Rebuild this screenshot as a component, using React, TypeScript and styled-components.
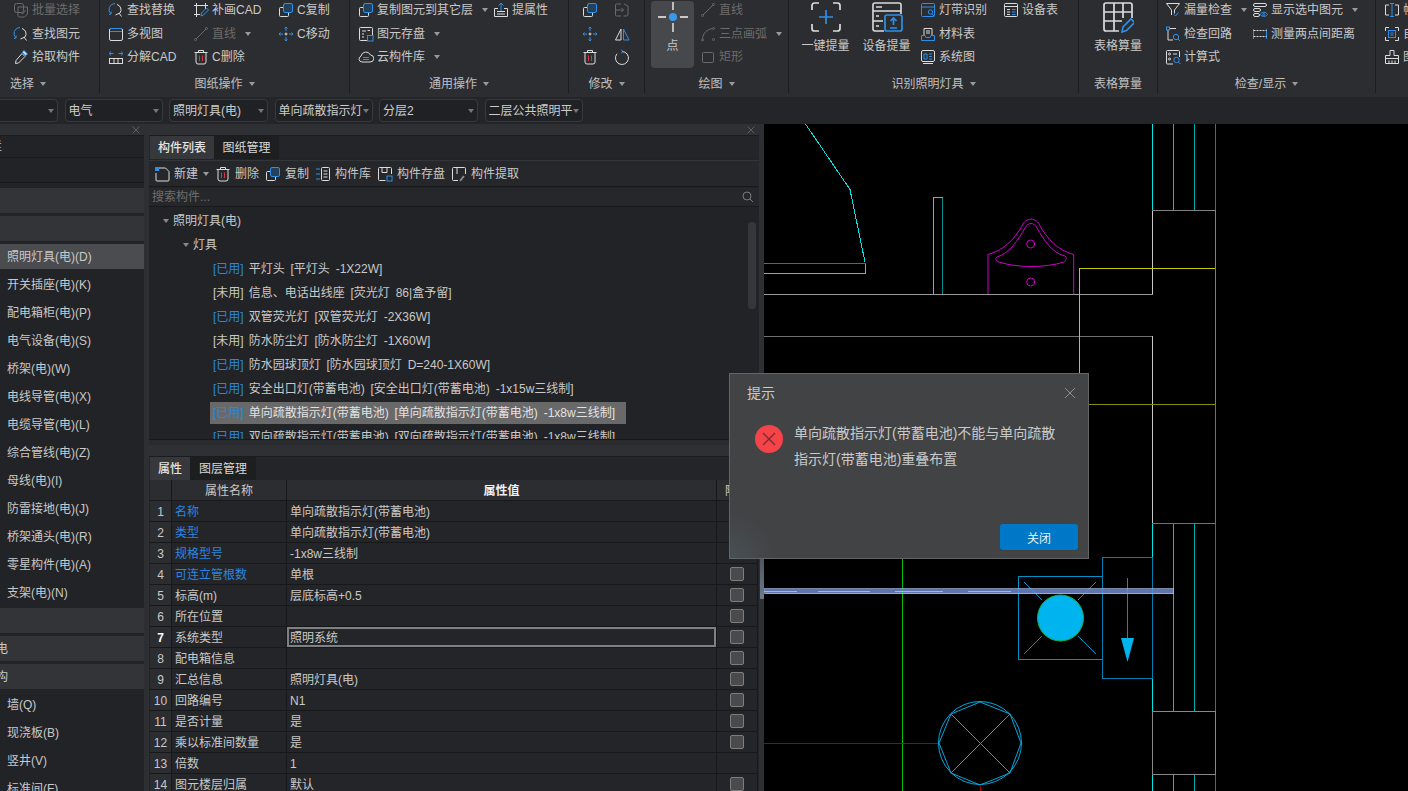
import React, { ReactNode } from 'react';
import styled, { createGlobalStyle } from 'styled-components';

const Global = createGlobalStyle`
  html, body { margin: 0; padding: 0; background: #000; }
  * { box-sizing: border-box; }
`;

const W = '#dcdcdc', B = '#2f8fe8', R = '#e0353a', D = '#6a6a6a';

const icons: Record<string, ReactNode> = {
  batch: <g stroke={D}><rect x="1.500" y="1.500" width="9" height="9" rx="2" /><path d="M5 5h9.500v7l-3 3H6.500a1.500 1.500 0 0 1-1.500-1.500zM7.500 10l2 2 3-4" /></g>,
  find: <><path stroke={B} d="M7 1.500A6 6 0 0 0 3 12l-2 .5M3 12l.2-2.500" /><path stroke={W} d="M9 2.500a5.500 5.500 0 0 1 3 8.500l-4.500 2M11 11l2.500 3.500" /></>,
  pick: <><path stroke={W} d="M9 4.500l3 3-6.500 6.500-3 .5.5-3z" /><path stroke={B} d="M10 2.500l1-1 3.500 3.500-1 1-1 .5-3-3z" fill={W} /></>,
  multi: <><rect x="1.500" y="2.500" width="13" height="12" rx="1.500" stroke={W} /><path stroke={B} d="M2 2.500h12M2 5.500h12" /></>,
  explode: <><rect x="1.500" y="9.500" width="13" height="5" stroke={W} /><path stroke={W} d="M6 9.500v5M10 9.500v5" /><path stroke={B} d="M1.500 4.500h4M2.500 2.500l-1 2 1 2M14.500 4.500h-4M13.500 2.500l1 2-1 2" /></>,
  patch: <><path stroke={W} d="M3.500 1v14M1 3.500h14M12.500 1v6M1 12.500h6" /><path stroke={B} d="M8 14l.5-3 5-5 2 2-5 5z" /></>,
  line: <g stroke={D}><path d="M3 13L13 3" /><circle cx="2.500" cy="13.500" r="1" /><circle cx="13.500" cy="2.500" r="1" /></g>,
  trash: <><path stroke={W} d="M1.500 3.500h13M5.500 3.500v-2h5v2M3 3.500V13a2 2 0 0 0 2 2h6a2 2 0 0 0 2-2V3.500" /><path stroke={R} d="M6.500 6.500v5.500M9.500 6.500v5.500" /></>,
  copy: <><path stroke={W} d="M5 5.500H2.500a1 1 0 0 0-1 1v7a1 1 0 0 0 1 1h7a1 1 0 0 0 1-1V11" /><rect x="5.500" y="1.500" width="9" height="9" rx="1.500" stroke={B} fill="#22415f" /></>,
  move: <><path stroke={B} d="M8 1v4M8 11v4M1 8h4M11 8h4M6.500 2.500L8 1l1.500 1.500M6.500 13.500L8 15l1.500-1.500M2.500 6.500L1 8l1.500 1.500M13.500 6.500L15 8l-1.500 1.500" /><path stroke={W} d="M8 6.500v3M6.500 8h3" /></>,
  disk: <><path stroke={W} d="M14.500 9V2.500a1 1 0 0 0-1-1h-11a1 1 0 0 0-1 1v11a1 1 0 0 0 1 1H9M4 5h4M4 8h2M4 11h2M9.500 4.500h2.500" /><rect x="9.500" y="9.500" width="5.500" height="5.500" stroke={B} /></>,
  cloud: <><path stroke={W} d="M4 13a3 3 0 0 1-1-5.800A5 5 0 0 1 12.500 6 3.500 3.500 0 0 1 12 13z" /><path stroke={B} d="M5 8.500h6M5 10.500h6" /></>,
  attr: <><path stroke={W} d="M5 6.500H1.500v8h13v-8H11M4 9.500h8M4 12h8" /><path stroke={B} d="M8 9V1M5.500 3.500L8 1l2.500 2.500" /></>,
  flip: <g stroke={D}><path d="M7 2H2.500a1 1 0 0 0-1 1v10a1 1 0 0 0 1 1H7M10 2l4 2v9l-1.500 1H9.500M1.500 8h8M7.500 6l2 2-2 2" /></g>,
  mirror: <><path stroke={W} d="M7 3v11H1.500z" /><path stroke={B} d="M9.500 3v11H15z" /></>,
  rotate: <><path stroke={W} d="M8 2.500a6.500 6.500 0 1 1-5 2.300" /><path stroke={B} d="M7 .8L9.200 2.500 7 4.200" /></>,
  arc: <g stroke={D}><path d="M2.500 13C3 7 7 3.500 12.500 2.500" /><circle cx="2.500" cy="14" r="1" /><circle cx="13.500" cy="2.500" r="1" /><circle cx="13.500" cy="13.500" r="1" /></g>,
  rect: <g stroke={D}><rect x="2.500" y="3.500" width="11" height="10" rx="1" /></g>,
  band: <><rect x="1.500" y="1.500" width="13" height="13" rx="1" stroke={B} /><path stroke={B} d="M1.500 5h13" /><circle cx="10.500" cy="10" r="2.200" stroke={B} /><path stroke={B} d="M12 12l2 2" /></>,
  material: <><path stroke={W} d="M4 9V2.500h8V9M6 5h4M6 7h4" /><path stroke={B} d="M1.500 9.500H5l1 2h4l1-2h3.500v5h-13z" /></>,
  system: <><rect x="1.500" y="1.500" width="13" height="11" rx="1.500" stroke={W} /><path stroke={W} d="M3 14.500h10" /><path stroke={B} d="M4 5h3v5H4zM9 5h3M9 7.500h3M9 10h3" /></>,
  table: <><rect x="1.500" y="1.500" width="13" height="13" rx="1" stroke={W} /><path stroke={W} d="M1.500 4.500h13M4 7.500h3M4 10h3M4 12.500h3" /><path stroke={B} d="M9 7.500h3.500M9 10h3.500M9 12.500h3.500" /></>,
  funnel: <><path stroke={W} d="M1.500 1.500h13L9.500 8v3.500M6.500 13V8z" /><path stroke={W} d="M1.500 1.500L6.500 8" /><path stroke={B} d="M9 12.500l1.500 1.500 3-3.500" /></>,
  loop: <><path stroke={W} d="M3 3.500V14h5M5 2.500h6" /><rect x="1.500" y="1" width="3" height="3" stroke={B} /><circle cx="11" cy="11" r="2.700" stroke={B} /><path stroke={B} d="M13 13l2 2" /></>,
  formula: <><path stroke={W} d="M8 15H2.500a1 1 0 0 1-1-1V2.500a1 1 0 0 1 1-1h11a1 1 0 0 1 1 1V8M8 5h4" /><circle cx="4.500" cy="5" r="1" stroke={W} /><circle cx="4.500" cy="10" r="1" stroke={W} /><circle cx="11.500" cy="11" r="2.700" stroke={B} /><path stroke={B} d="M13.500 13l2 2" /></>,
  display: <><rect x="1.500" y="1.500" width="13" height="3" rx="1.500" stroke={W} /><rect x="1.500" y="6.500" width="7" height="3" rx="1.500" stroke={W} /><rect x="1.500" y="11.500" width="6" height="3" rx="1.500" stroke={W} /><path stroke={B} d="M8 12.500c2-3 6-3 7.500 0-1.500 2.500-5.500 2.500-7.500 0z" /><circle cx="11.700" cy="12.500" r="1" stroke={B} /></>,
  measure: <><path stroke={B} d="M1.500 3v10M14.500 3v10" /><path stroke={W} d="M1.500 4.500h13M1.500 10.500h13" strokeDasharray="2 1" /></>,
  caliper: <><path stroke={W} d="M5 3H1.500v10H5M11 3h3.500v10H11" /><path stroke={B} d="M8 1.500v13M6 1.500h4M6 14.500h4" /></>,
  frame: <><path stroke={W} d="M1.500 5V1.500H5M11 1.500h3.500V5M14.500 11v3.500H11M5 14.500H1.500V11" /><rect x="4.500" y="4.500" width="7" height="7" stroke={B} /><path stroke={B} d="M6.500 7h3M6.500 9h3" /></>,
  brush: <><path stroke={W} d="M6 1.500h4v5H14.500v8h-13v-8H6zM1.500 9.500h13M5 14.500v-3M8 14.500v-3M11 14.500v-3" /></>,
  newdoc: <><path stroke={W} d="M5 2h6.500L15 5.500V14a1 1 0 0 1-1 1H3a1 1 0 0 1-1-1V7" /><rect x="1" y="1" width="4" height="4" fill={B} stroke="none" /></>,
  lib: <><path stroke={B} d="M1 3h4M1 8h4M1 13h4" /><rect x="6.500" y="1.500" width="8" height="13" rx="1" stroke={W} /><path stroke={W} d="M8.500 5h4M8.500 8h4M8.500 11h4" /></>,
  store: <><path stroke={W} d="M8.500 14.500h-6a1 1 0 0 1-1-1v-11a1 1 0 0 1 1-1h11a1 1 0 0 1 1 1V8M5 1.500v5h5v-5" /><rect x="10" y="10" width="5" height="5" stroke={B} /></>,
  extract: <><path stroke={W} d="M7 14.500H2.500a1 1 0 0 1-1-1v-11a1 1 0 0 1 1-1h11a1 1 0 0 1 1 1V8M6 1.500V8" /><path stroke="#888" d="M9 15l4-5" strokeWidth="2" /></>,
  bigPlus: <><path stroke={W} d="M2 9V4.500A2.500 2.500 0 0 1 4.500 2H9M23 2h4.500A2.500 2.500 0 0 1 30 4.500V9M30 23v4.500a2.500 2.500 0 0 1-2.500 2.500H23M9 30H4.500A2.500 2.500 0 0 1 2 27.500V23" strokeWidth="1.700" /><path stroke={B} d="M16 9v14M9 16h14" strokeWidth="1.700" /></>,
  bigDevice: <><path stroke={W} d="M13 30H4a2 2 0 0 1-2-2V4a2 2 0 0 1 2-2h24a2 2 0 0 1 2 2v9M2 10h28M2 20h10M5 6h6M5 15h3M5 25h3" strokeWidth="1.600" /><rect x="14" y="14" width="17" height="16" rx="2" stroke={B} strokeWidth="1.700" /><path stroke={B} d="M22.500 24v-7M19.500 20l3-3 3 3M19 27h7" strokeWidth="1.700" /></>,
  bigTable: <><path stroke={W} d="M17 30H4a2 2 0 0 1-2-2V4a2 2 0 0 1 2-2h24a2 2 0 0 1 2 2v13M2 11h28M2 20h18M12 2v28M21 2v15" strokeWidth="1.700" /><path stroke={B} d="M20 31l1-5 8-8 3.500 3.500-8 8z" strokeWidth="1.600" /></>,
};

const Svg = styled.svg<{ $s: number }>`
  width: ${p => p.$s}px;
  height: ${p => p.$s}px;
  flex: none;
  fill: none;
  stroke-width: 1;
  display: block;
`;

const Icon = ({ n, s = 16 }: { n: string; s?: number }) => (
  <Svg $s={s} viewBox={`0 0 ${s} ${s}`}>{icons[n]}</Svg>
);

const Root = styled.div`
  position: relative;
  width: 1408px;
  height: 791px;
  overflow: hidden;
  background: #2e2f32;
  display: flex;
  flex-direction: column;
  font: 12px/16px "Liberation Sans", "Noto Sans CJK SC", sans-serif;
  color: #c9c9c9;
`;

const Ribbon = styled.div`
  height: 97px;
  flex: none;
  display: flex;
  background: #2c2d30;
  overflow: hidden;
`;

const Group = styled.section<{ $w: number; $pad?: number; $shift?: number }>`
  flex: none;
  width: ${p => p.$w}px;
  margin-left: ${p => p.$shift || 0}px;
  height: 93px;
  border-right: 1px solid #1c1d1f;
  display: flex;
  flex-direction: column;
  padding-left: ${p => p.$pad || 0}px;
`;

const GroupBody = styled.div`
  height: 76.500px;
  margin-top: -1.500px;
  display: flex;
`;

const GroupLabel = styled.div<{ $pad?: number }>`
  height: 18px;
  margin-left: ${p => -(p.$pad || 0)}px;
  display: flex;
  align-items: center;
  justify-content: center;
  gap: 6px;
  color: #c0c0c0;
`;

const Caret = styled.i`
  display: inline-block;
  flex: none;
  width: 0;
  height: 0;
  border-left: 3.500px solid transparent;
  border-right: 3.500px solid transparent;
  border-top: 4px solid #9a9a9a;
`;

const Col = styled.div<{ $w?: number; $ml?: number }>`
  flex: none;
  width: ${p => (p.$w ? `${p.$w}px` : 'auto')};
  margin-left: ${p => p.$ml || 0}px;
  display: flex;
  flex-direction: column;
`;

const Tool = styled.div<{ $off?: boolean }>`
  height: 23.500px;
  display: flex;
  align-items: center;
  gap: 3px;
  white-space: nowrap;
  color: ${p => (p.$off ? '#6c6c6c' : '#c9c9c9')};
  i { margin-left: 6px; }
`;

const BigTool = styled.div<{ $on?: boolean; $w: number }>`
  flex: none;
  width: ${p => p.$w}px;
  height: 67px;
  margin-top: 2.500px;
  border-radius: 4px;
  display: flex;
  flex-direction: column;
  align-items: center;
  gap: 5px;
  white-space: nowrap;
  background: ${p => (p.$on ? '#47484b' : 'transparent')};
`;

const ComboBar = styled.div`
  height: 27px;
  flex: none;
  background: #242528;
  display: flex;
  align-items: flex-start;
  gap: 6.500px;
  padding-top: 2px;
`;

const Combo = styled.div<{ $w: number; $shift?: number }>`
  flex: none;
  width: ${p => p.$w}px;
  height: 23px;
  margin-left: ${p => p.$shift || 0}px;
  border: 1px solid #38393c;
  border-radius: 4px;
  background: #202124;
  display: flex;
  align-items: center;
  justify-content: space-between;
  padding: 0 3px 0 3px;
  white-space: nowrap;
  color: #cdcdcd;
  i { border-top-color: #777; }
`;

const Main = styled.div`
  flex: 1;
  min-height: 0;
  display: flex;
`;

const LeftPanel = styled.aside`
  flex: none;
  width: 144px;
  margin-right: 5px;
  background: #222326;
  overflow: hidden;
  display: flex;
  flex-direction: column;
`;

const TitleBar = styled.div`
  flex: none;
  height: 12px;
  background: #2f3033;
  border-bottom: 1px solid #1b1c1e;
  display: flex;
  justify-content: flex-end;
  align-items: center;
  padding-right: 4px;
`;

const LeftHead = styled.div<{ $h: number }>`
  flex: none;
  height: ${p => p.$h}px;
  border-bottom: 1px solid #18191b;
  display: flex;
  align-items: center;
  white-space: nowrap;
  span { margin-left: -34px; }
`;

const NavList = styled.div`
  padding-top: 5px;
  display: flex;
  flex-direction: column;
  gap: 3px;
`;

const NavRow = styled.div<{ $kind?: 'bar' | 'sel' }>`
  flex: none;
  height: 25px;
  display: flex;
  align-items: center;
  padding-left: ${p => (p.$kind === 'bar' ? 0 : 7)}px;
  white-space: nowrap;
  background: ${p => (p.$kind === 'bar' ? '#333437' : p.$kind === 'sel' ? '#4b4c4f' : 'transparent')};
  span { margin-left: -16px; }
`;

const MidPanel = styled.div`
  flex: none;
  width: 610px;
  background: #222326;
  display: flex;
  flex-direction: column;
  overflow: hidden;
`;

const Tabs = styled.div`
  flex: none;
  height: 23px;
  display: flex;
  background: #242528;
  padding-left: 1px;
`;

const Tab = styled.div<{ $on?: boolean; $w: number }>`
  width: ${p => p.$w}px;
  padding-top: 1px;
  display: flex;
  align-items: center;
  justify-content: center;
  font-weight: ${p => (p.$on ? 500 : 400)};
  color: ${p => (p.$on ? '#e4e4e4' : '#d8d8d8')};
  background: ${p => (p.$on ? '#37383b' : '#1d1e20')};
`;

const ToolRow = styled.div`
  flex: none;
  height: 27px;
  margin: 1px 0;
  border-top: 1px solid #343538;
  border-bottom: 1px solid #18191b;
  background: #26272a;
  display: flex;
  align-items: center;
  gap: 6px;
  padding-left: 5px;
`;

const RowTool = styled.div`
  display: flex;
  align-items: center;
  gap: 4px;
  white-space: nowrap;
  i { margin-left: 1px; }
`;

const Search = styled.div`
  flex: none;
  height: 19px;
  background: #26272a;
  border-bottom: 1px solid #18191b;
  display: flex;
  align-items: center;
  justify-content: space-between;
  padding: 0 5px 0 3px;
  color: #6e6e6e;
`;

const Tree = styled.div`
  position: relative;
  flex: none;
  height: 233px;
  padding-top: 2px;
  overflow: hidden;
  border-bottom: 1px solid #18191b;
`;

const TreeRow = styled.div<{ $ind: number }>`
  height: 24px;
  display: flex;
  align-items: center;
  white-space: nowrap;
  padding-left: ${p => p.$ind}px;
  gap: 4px;
  word-spacing: 2.500px;
  i { border-top-color: #8a8a8a; }
`;

const Leaf = styled.div<{ $sel?: boolean }>`
  height: 22px;
  display: flex;
  align-items: center;
  gap: 5px;
  padding: 0 11px 0 3px;
  background: ${p => (p.$sel ? '#69696a' : 'transparent')};
  color: ${p => (p.$sel ? '#e2e2e2' : '#c9c9c9')};
`;

const Tag = styled.span<{ $used: boolean }>`
  color: ${p => (p.$used ? '#2b86e0' : '#c9c9c9')};
`;

const ScrollThumb = styled.div`
  position: absolute;
  right: 3px;
  top: 15px;
  width: 8px;
  height: 87px;
  border-radius: 4px;
  background: #36373a;
`;

const Splitter = styled.div`
  flex: none;
  height: 5px;
  background: #2a2b2e;
`;

const Table = styled.div`
  display: grid;
  grid-template-columns: 22px 115px 430px 41px;
  grid-auto-rows: 21px;
  padding-left: 1px;
`;

const Cell = styled.div<{ $center?: boolean; $head?: boolean; $blue?: boolean; $edit?: boolean }>`
  display: flex;
  align-items: center;
  justify-content: ${p => (p.$center ? 'center' : 'flex-start')};
  padding: 1px ${p => (p.$center ? 0 : 3)}px 0;
  white-space: nowrap;
  border-right: 1px solid #17181a;
  border-bottom: 1px solid #17181a;
  background: ${p => (p.$head ? '#2c2d30' : '#242528')};
  color: ${p => (p.$blue ? '#2b86e0' : '#c9c9c9')};
  box-shadow: ${p => (p.$edit ? 'inset 0 0 0 2px #808080' : 'none')};
`;

const IdxCell = styled(Cell) <{ $cur?: boolean }>`
  background: #2c2d30;
  font-weight: ${p => (p.$cur ? 700 : 400)};
  color: ${p => (p.$cur ? '#fff' : '#c9c9c9')};
`;

const ValueHead = styled(Cell)`
  font-weight: 700;
  color: #f0f0f0;
`;

const Check = styled.div`
  width: 14px;
  height: 14px;
  margin-top: -1px;
  border: 1px solid #7d7d7d;
  border-radius: 2px;
  background: #4a4a4c;
`;

const CanvasGutter = styled.div`
  flex: none;
  width: 5px;
  background: #2e2f32;
  position: relative;
`;

const GutterThumb = styled.div`
  position: absolute;
  left: 1px;
  right: 0;
  top: 430px;
  height: 45px;
  background: linear-gradient(#4a5058, #6d7a8a);
`;

const Canvas = styled.svg`
  flex: 1;
  height: 667px;
  display: block;
  background: #000;
  fill: none;
`;

const Dialog = styled.div`
  position: absolute;
  left: 729px;
  top: 373px;
  width: 360px;
  height: 186px;
  border: 1px solid #626466;
  background: radial-gradient(circle at 0 100%, #475055 0, #424344 45px);
  display: flex;
  flex-direction: column;
  font-size: 14px;
  color: #c9c9c9;
`;

const DialogHead = styled.div`
  height: 39px;
  flex: none;
  display: flex;
  align-items: center;
  justify-content: space-between;
  padding: 0 12px 2px 17px;
`;

const DialogBody = styled.div`
  flex: 1;
  display: flex;
  gap: 11px;
  padding: 7px 24px 0 25px;
  svg { margin-top: 5px; }
`;

const Message = styled.div`
  line-height: 26px;
`;

const DialogFoot = styled.div`
  flex: none;
  height: 34px;
  display: flex;
  justify-content: flex-end;
  padding-right: 10px;
`;

const CloseBtn = styled.button`
  width: 78px;
  height: 26px;
  padding: 0;
  border: none;
  border-radius: 3px;
  background: #0078c8;
  color: #e8f2fa;
  font: 12px "Liberation Sans", "Noto Sans CJK SC", sans-serif;
`;

const Close = ({ c, s }: { c: string; s: number }) => (
  <Svg $s={s} viewBox="0 0 12 12"><path d="M1 1l10 10M11 1L1 11" stroke={c} /></Svg>
);

const Down = () => <Caret />;

const nav1 = ['照明灯具(电)(D)', '开关插座(电)(K)', '配电箱柜(电)(P)', '电气设备(电)(S)', '桥架(电)(W)', '电线导管(电)(X)', '电缆导管(电)(L)', '综合管线(电)(Z)', '母线(电)(I)', '防雷接地(电)(J)', '桥架通头(电)(R)', '零星构件(电)(A)', '支架(电)(N)'];
const nav2 = ['墙(Q)', '现浇板(B)', '竖井(V)', '标准间(F)'];

const leaves: [boolean, string, boolean?][] = [
  [true, '平灯头 [平灯头 -1X22W]'],
  [false, '信息、电话出线座 [荧光灯 86|盒予留]'],
  [true, '双管荧光灯 [双管荧光灯 -2X36W]'],
  [false, '防水防尘灯 [防水防尘灯 -1X60W]'],
  [true, '防水园球顶灯 [防水园球顶灯 D=240-1X60W]'],
  [true, '安全出口灯(带蓄电池) [安全出口灯(带蓄电池) -1x15w三线制]'],
  [true, '单向疏散指示灯(带蓄电池) [单向疏散指示灯(带蓄电池) -1x8w三线制]', true],
  [true, '双向疏散指示灯(带蓄电池) [双向疏散指示灯(带蓄电池) -1x8w三线制]'],
];

const props: [string, string, boolean, boolean][] = [
  ['名称', '单向疏散指示灯(带蓄电池)', true, false],
  ['类型', '单向疏散指示灯(带蓄电池)', true, false],
  ['规格型号', '-1x8w三线制', true, false],
  ['可连立管根数', '单根', true, true],
  ['标高(m)', '层底标高+0.5', false, true],
  ['所在位置', '', false, true],
  ['系统类型', '照明系统', false, true],
  ['配电箱信息', '', false, true],
  ['汇总信息', '照明灯具(电)', false, true],
  ['回路编号', 'N1', false, true],
  ['是否计量', '是', false, true],
  ['乘以标准间数量', '是', false, true],
  ['倍数', '1', false, false],
  ['图元楼层归属', '默认', false, true],
];

const T = ({ n, t, off, drop }: { n: string; t?: string; off?: boolean; drop?: boolean }) => (
  <Tool $off={off}><Icon n={n} />{t}{drop && <Down />}</Tool>
);

const PointIcon = () => (
  <Svg $s={32} viewBox="0 0 32 32">
    <path d="M16 1v8M16 22v9M1 16h8M23 16h8" stroke="#c9c9c9" strokeWidth="1.800" />
    <circle cx="16" cy="16" r="4" fill="#3a97f0" />
  </Svg>
);

const Drawing = () => (
  <Canvas viewBox="764 124 644 667" shapeRendering="crispEdges">
    <g stroke="#00e5e5">
      <path d="M805.500 124L850 189.500 865 262" />
      <path d="M764 273.500H865.500V263" />
      <path d="M933.500 294V197.500H942.500" />
      <path d="M1152.500 124V210M1152.500 524V711M1152.500 774V791" />
      <path d="M1173.500 124V210M1173.500 524V711M1173.500 774V791" stroke="#00c0c0" />
      <path d="M1194.500 124V210M1194.500 524V711M1194.500 774V791" stroke="#00b0b0" />
    </g>
    <path d="M764 263.500H865.500M1215.500 124V210M1215.500 524V711M1215.500 774V791M942.500 197.500V294" stroke="#008c8c" />
    <g stroke="#8e8e8e">
      <path d="M764 294.500H1152.500" stroke="#9a9a9a" />
      <path d="M764 336.500H1152.500" stroke="#707070" />
      <path d="M1152.500 210V294M1152.500 336V523" stroke="#c8c8c8" />
      <path d="M1152 210.500H1215.500V268" stroke="#808080" />
      <path d="M1215.500 404V523.500H1152" stroke="#707070" />
      <rect x="1152.500" y="711.500" width="63" height="63" stroke="#888" />
    </g>
    <path d="M1079.500 373V268.500H1215.500" stroke="#c8c800" />
    <path d="M1215.500 268V404.500H1089" stroke="#8c8c00" />
    <g stroke="#d000d0" shapeRendering="auto">
      <path d="M988 294V254.500C1005 250 1015 238 1022 226 1025 217 1037 217 1040 226 1047 238 1057 250 1073.700 254.500V294" />
      <path d="M997 257C1010 253 1018 240 1025 228 1028 222 1034 222 1037 228 1044 240 1052 253 1065 256 1067 258 1066 261 1064 262 1045 268 1017 268 999 262 996 261 995 259 997 257Z" />
      <circle cx="1030.700" cy="244" r="4" />
      <circle cx="1030.700" cy="282" r="4" />
    </g>
    <path d="M902.500 559V791" stroke="#00c000" />
    <path d="M764 743.500H938M980.500 786V791" stroke="#a00000" />
    <g stroke="#0090c8">
      <rect x="1018.500" y="576.500" width="84" height="83" />
      <rect x="1102.500" y="557.500" width="50" height="120.500" stroke="#0080b0" />
      <path d="M1024 582L1042 600M1096 582L1078 600M1024 654L1042 636M1096 654L1078 636" shapeRendering="auto" />
      <path d="M1127.500 578V640" />
    </g>
    <path d="M1121 638H1134L1127.500 662Z" fill="#00b4f0" shapeRendering="auto" />
    <circle cx="1060.500" cy="618" r="23" fill="#00b4f0" stroke="#10b040" shapeRendering="auto" />
    <g stroke="#00a8e0" shapeRendering="auto">
      <circle cx="980" cy="743" r="41.500" />
      <path d="M980 702L1010 714 1021 743 1010 773 980 785 951 773 939 743 951 714Z" />
      <path d="M951 714L1010 773M1010 714L951 773" />
    </g>
    <rect x="764.500" y="588.500" width="409" height="5" fill="#7089cc" fillOpacity=".85" stroke="#a8c0f0" strokeOpacity=".7" />
    <path d="M764 591.500H797M818 591.500H870M895 591.500H943M968 591.500H1011" stroke="#7fd0b0" />
  </Canvas>
);

export default function App() {
  return (
    <Root>
      <Global />
      <Ribbon>
        <Group $w={143} $pad={56} $shift={-43}>
          <GroupBody>
            <Col>
              <T n="batch" t="批量选择" off />
              <T n="find" t="查找图元" />
              <T n="pick" t="拾取构件" />
            </Col>
          </GroupBody>
          <GroupLabel $pad={56}>
            <span>选择</span><Down />
          </GroupLabel>
        </Group>
        <Group $w={250} $pad={8}>
          <GroupBody>
            <Col $w={85}>
              <T n="find" t="查找替换" />
              <T n="multi" t="多视图" />
              <T n="explode" t="分解CAD" />
            </Col>
            <Col $w={85}>
              <T n="patch" t="补画CAD" />
              <T n="line" t="直线" off drop />
              <T n="trash" t="C删除" />
            </Col>
            <Col>
              <T n="copy" t="C复制" />
              <T n="move" t="C移动" />
            </Col>
          </GroupBody>
          <GroupLabel $pad={8}><span>图纸操作</span><Down /></GroupLabel>
        </Group>
        <Group $w={219} $pad={8}>
          <GroupBody>
            <Col $w={135}>
              <T n="copy" t="复制图元到其它层" drop />
              <T n="disk" t="图元存盘" drop />
              <T n="cloud" t="云构件库" drop />
            </Col>
            <Col>
              <T n="attr" t="提属性" />
            </Col>
          </GroupBody>
          <GroupLabel $pad={8}><span>通用操作</span><Down /></GroupLabel>
        </Group>
        <Group $w={76} $pad={13}>
          <GroupBody>
            <Col $w={32}>
              <T n="copy" />
              <T n="move" />
              <T n="trash" />
            </Col>
            <Col>
              <T n="flip" />
              <T n="mirror" />
              <T n="rotate" />
            </Col>
          </GroupBody>
          <GroupLabel $pad={13}><span>修改</span><Down /></GroupLabel>
        </Group>
        <Group $w={144} $pad={6}>
          <GroupBody>
            <BigTool $on $w={43}>
              <PointIcon />
              点
            </BigTool>
            <Col $ml={6}>
              <T n="line" t="直线" off />
              <T n="arc" t="三点画弧" off drop />
              <T n="rect" t="矩形" off />
            </Col>
          </GroupBody>
          <GroupLabel $pad={6}><span>绘图</span><Down /></GroupLabel>
        </Group>
        <Group $w={290} $pad={6}>
          <GroupBody>
            <BigTool $w={61}><Icon n="bigPlus" s={32} />一键提量</BigTool>
            <BigTool $w={61}><Icon n="bigDevice" s={32} />设备提量</BigTool>
            <Col $w={83} $ml={3}>
              <T n="band" t="灯带识别" />
              <T n="material" t="材料表" />
              <T n="system" t="系统图" />
            </Col>
            <Col>
              <T n="table" t="设备表" />
            </Col>
          </GroupBody>
          <GroupLabel $pad={6}><span>识别照明灯具</span><Down /></GroupLabel>
        </Group>
        <Group $w={79}>
          <GroupBody>
            <BigTool $w={78}><Icon n="bigTable" s={32} />表格算量</BigTool>
          </GroupBody>
          <GroupLabel><span>表格算量</span></GroupLabel>
        </Group>
        <Group $w={218} $pad={7}>
          <GroupBody>
            <Col $w={87}>
              <T n="funnel" t="漏量检查" drop />
              <T n="loop" t="检查回路" />
              <T n="formula" t="计算式" />
            </Col>
            <Col>
              <T n="display" t="显示选中图元" drop />
              <T n="measure" t="测量两点间距离" />
            </Col>
          </GroupBody>
          <GroupLabel $pad={7}><span>检查/显示</span><Down /></GroupLabel>
        </Group>
        <Group $w={40} $pad={8}>
          <GroupBody>
            <Col>
              <T n="caliper" t="帧选" />
              <T n="frame" t="自动" />
              <T n="brush" t="图层" />
            </Col>
          </GroupBody>
        </Group>
      </Ribbon>
      <ComboBar>
        <Combo $w={99} $shift={-41}><span /><Down /></Combo>
        <Combo $w={98}>电气<Down /></Combo>
        <Combo $w={99}>照明灯具(电)<Down /></Combo>
        <Combo $w={98}>单向疏散指示灯<Down /></Combo>
        <Combo $w={99}>分层2<Down /></Combo>
        <Combo $w={98}>二层公共照明平<Down /></Combo>
      </ComboBar>
      <Main>
        <LeftPanel>
          <TitleBar><Close c="#777" s={8} /></TitleBar>
          <LeftHead $h={22}><span>导航栏</span></LeftHead>
          <LeftHead $h={25} />
          <NavList>
            <NavRow $kind="bar" />
            <NavRow $kind="bar" />
            {nav1.map((t, i) => <NavRow key={t} $kind={i === 0 ? 'sel' : undefined}>{t}</NavRow>)}
            <NavRow $kind="bar" />
            <NavRow $kind="bar"><span>强电</span></NavRow>
            <NavRow $kind="bar"><span>结构</span></NavRow>
            {nav2.map(t => <NavRow key={t}>{t}</NavRow>)}
          </NavList>
        </LeftPanel>
        <MidPanel>
          <TitleBar><Close c="#777" s={8} /></TitleBar>
          <Tabs>
            <Tab $on $w={64}>构件列表</Tab>
            <Tab $w={65}>图纸管理</Tab>
          </Tabs>
          <ToolRow>
            <RowTool><Icon n="newdoc" />新建<Down /></RowTool>
            <RowTool><Icon n="trash" />删除</RowTool>
            <RowTool><Icon n="copy" />复制</RowTool>
            <RowTool><Icon n="lib" />构件库</RowTool>
            <RowTool><Icon n="store" />构件存盘</RowTool>
            <RowTool><Icon n="extract" />构件提取</RowTool>
          </ToolRow>
          <Search>
            搜索构件...
            <Svg $s={12} viewBox="0 0 12 12"><circle cx="5" cy="5" r="4" stroke="#7a7a7a" /><path d="M8 8l3 3" stroke="#7a7a7a" /></Svg>
          </Search>
          <Tree>
            <TreeRow $ind={14}><Caret />照明灯具(电)</TreeRow>
            <TreeRow $ind={34}><Caret />灯具</TreeRow>
            {leaves.map(([used, text, sel]) => (
              <TreeRow key={text} $ind={61}>
                <Leaf $sel={sel}>
                  <Tag $used={used}>{used ? '[已用]' : '[未用]'}</Tag>
                  {text}
                </Leaf>
              </TreeRow>
            ))}
            <ScrollThumb />
          </Tree>
          <Splitter />
          <TitleBar />
          <Tabs>
            <Tab $on $w={40}>属性</Tab>
            <Tab $w={66}>图层管理</Tab>
          </Tabs>
          <Table>
            <IdxCell />
            <Cell $head $center>属性名称</Cell>
            <ValueHead $head $center>属性值</ValueHead>
            <Cell $head $center>附加</Cell>
            {props.map(([name, value, blue, chk], i) => (
              <React.Fragment key={name}>
                <IdxCell $center $cur={i === 6}>{i + 1}</IdxCell>
                <Cell $blue={blue}>{name}</Cell>
                <Cell $edit={i === 6}>{value}</Cell>
                <Cell $center>{chk && <Check />}</Cell>
              </React.Fragment>
            ))}
          </Table>
        </MidPanel>
        <CanvasGutter><GutterThumb /></CanvasGutter>
        <Drawing />
      </Main>
      <Dialog>
        <DialogHead>
          提示
          <Close c="#8f9090" s={12} />
        </DialogHead>
        <DialogBody>
          <Svg $s={28} viewBox="0 0 28 28">
            <circle cx="14" cy="14" r="14" fill="#f4444a" />
            <path d="M8 8l12 12M20 8L8 20" stroke="#7a2a30" strokeWidth="1.300" />
          </Svg>
          <Message>单向疏散指示灯(带蓄电池)不能与单向疏散<br />指示灯(带蓄电池)重叠布置</Message>
        </DialogBody>
        <DialogFoot><CloseBtn>关闭</CloseBtn></DialogFoot>
      </Dialog>
    </Root>
  );
}
